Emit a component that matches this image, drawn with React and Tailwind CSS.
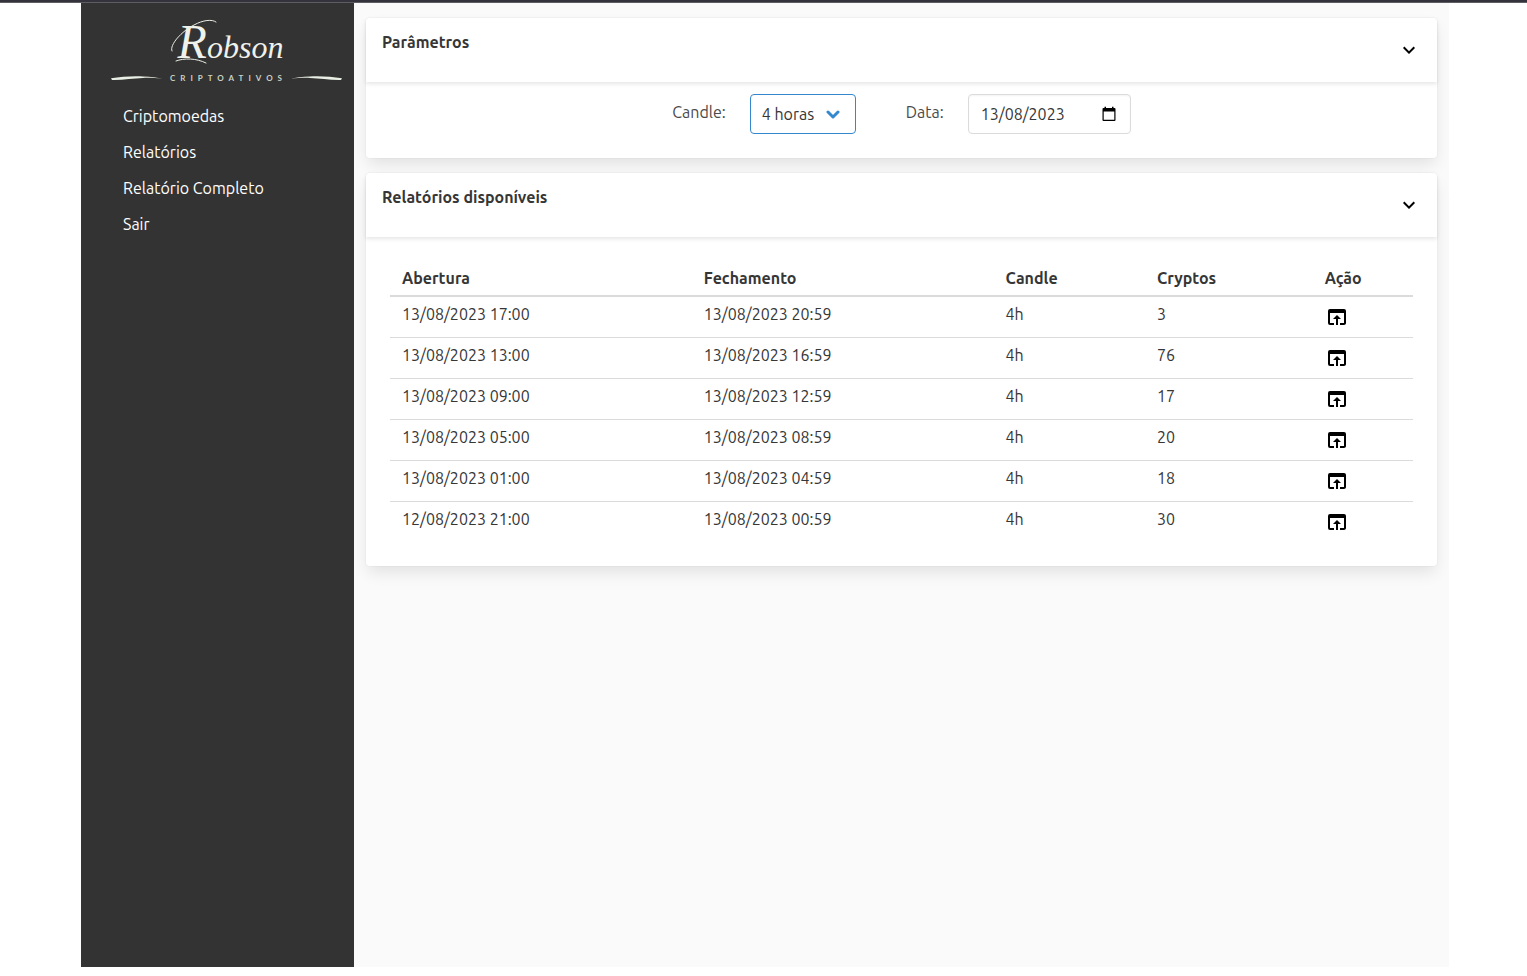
import React, { useState } from 'react';
import { MdExpandMore, MdOpenInBrowser } from 'react-icons/md';

const menuItems = ['Criptomoedas', 'Relatórios', 'Relatório Completo', 'Sair'];

const reports = [
  { open: '13/08/2023 17:00', close: '13/08/2023 20:59', candle: '4h', cryptos: 3 },
  { open: '13/08/2023 13:00', close: '13/08/2023 16:59', candle: '4h', cryptos: 76 },
  { open: '13/08/2023 09:00', close: '13/08/2023 12:59', candle: '4h', cryptos: 17 },
  { open: '13/08/2023 05:00', close: '13/08/2023 08:59', candle: '4h', cryptos: 20 },
  { open: '13/08/2023 01:00', close: '13/08/2023 04:59', candle: '4h', cryptos: 18 },
  { open: '12/08/2023 21:00', close: '13/08/2023 00:59', candle: '4h', cryptos: 30 },
];

const Swash = ({ className }) => (
  <svg className={className} width="52" height="6" viewBox="0 0 52 6" fill="#e9efe4">
    <path d="M0 3.200C10 1.600 22 .8 32 1.400c8 .4 14 1.200 20 2.200-8-.6-14-.9-20-.7C22 3.200 12 5.200 1 4.900z" />
  </svg>
);

const Logo = () => (
  <div className="flex h-[71px] flex-col items-center justify-between text-[#eef2ea]">
    <div className="relative flex h-[54px] items-center">
      {/* pen flourish around the initial */}
      <svg className="absolute top-1 left-0" width="48" height="54" viewBox="0 0 48 54" fill="none" stroke="#e9efe4" strokeWidth="1" strokeLinecap="round">
        <path d="M2 32C-1 26 12 12 24 6 33 1 42 0 46 3" />
        <path d="M6 42c8-3 20-3 30 2" />
      </svg>
      <span className="block pl-2 font-['Liberation_Serif',cursive] text-[32px] leading-none italic first-letter:text-5xl">Robson</span>
    </div>
    <div className="flex w-full items-center justify-between">
      <Swash />
      <span className="pl-1 font-[Lato,sans-serif] text-[8px] leading-4 font-bold tracking-[5px] text-[#c9d2c4]">CRIPTOATIVOS</span>
      <Swash className="-scale-x-100" />
    </div>
  </div>
);

const Card = ({ title, children }) => {
  const [open, setOpen] = useState(true);

  return (
    <section className="rounded bg-white shadow-[0_8px_16px_-2px_rgba(10,10,10,0.1),0_0_0_1px_rgba(10,10,10,0.02)]">
      <header className="flex h-16 items-stretch justify-between rounded-t shadow-[0_2px_4px_rgba(10,10,10,0.1)]">
        <h2 className="px-4 py-3 text-base font-bold text-[#363636]">{title}</h2>
        <button type="button" aria-label={title} aria-expanded={open} onClick={() => setOpen(!open)} className="px-4 text-black">
          <MdExpandMore size={24} />
        </button>
      </header>
      {open && children}
    </section>
  );
};

const App = () => {
  const [candle, setCandle] = useState('4');
  const [date, setDate] = useState('13/08/2023');

  return (
    <div className="min-h-screen bg-white font-['Ubuntu','Noto_Sans',sans-serif] text-base text-[#363636]">
      <div className="h-[3px] border-b border-[#5e5c64] bg-[#34323a]" />
      <div className="pl-[3px]">
        <div className="mx-auto flex min-h-[calc(100vh-12px)] max-w-[1368px]">
          <aside className="w-[273px] shrink-0 bg-[#333333] py-3 pr-3 pl-[30px]">
            <Logo />
            <nav className="mt-3">
              <ul>
                {menuItems.map((item) => (
                  <li key={item}>
                    <a href="#" className="block px-3 py-2 leading-5 text-white">{item}</a>
                  </li>
                ))}
              </ul>
            </nav>
          </aside>

          <main className="flex min-w-0 flex-1 flex-col gap-[15px] bg-[#fafafa] px-3 pt-[15px]">
            <Card title="Parâmetros">
              <div className="flex items-start justify-center gap-[50px] px-6 pt-3 pb-6 text-[#4a4a4a]">
                <div className="flex items-start gap-6">
                  <label htmlFor="candle" className="pt-[6px]">Candle:</label>
                  <div className="relative">
                    <select
                      id="candle"
                      value={candle}
                      onChange={(e) => setCandle(e.target.value)}
                      className="h-10 w-[106px] appearance-none rounded border border-[#3488ce] bg-white pl-[11px] text-[#363636] outline-none"
                    >
                      <option value="1">1 hora</option>
                      <option value="4">4 horas</option>
                    </select>
                    <svg className="pointer-events-none absolute top-4 right-4" width="14" height="9" viewBox="0 0 14 9" fill="none" stroke="#3488ce" strokeWidth="3" strokeLinecap="round" strokeLinejoin="round">
                      <path d="M2 2l5 5 5-5" />
                    </svg>
                  </div>
                </div>
                <div className="flex items-start gap-6">
                  <label htmlFor="date" className="pt-[6px]">Data:</label>
                  <div className="relative">
                    <input
                      id="date"
                      type="text"
                      value={date}
                      onChange={(e) => setDate(e.target.value)}
                      className="h-10 w-[163px] rounded border border-[#dbdbdb] bg-white px-3 text-[#363636] shadow-[inset_0_1px_2px_rgba(10,10,10,0.05)] outline-none"
                    />
                    <button type="button" aria-label="Abrir calendário" className="absolute top-3 right-[15px]">
                      <svg width="14" height="15" viewBox="0 0 14 15" fill="#000">
                        <path fillRule="evenodd" d="M1.500 2H2.500V.8H4V2h6V.8h1.500V2h1q1 0 1 1v11q0 1-1 1h-11q-1 0-1-1V3q0-1 1-1zM1.700 5.500v8.300h10.600V5.500z" />
                      </svg>
                    </button>
                  </div>
                </div>
              </div>
            </Card>

            <Card title="Relatórios disponíveis">
              <div className="p-6">
                <table className="w-full table-fixed text-left">
                  <thead>
                    <tr className="border-b-2 border-[#dbdbdb]">
                      <th className="w-[29.5%] px-3 py-[5px] font-bold">Abertura</th>
                      <th className="w-[29.5%] px-3 py-[5px] font-bold">Fechamento</th>
                      <th className="w-[14.8%] px-3 py-[5px] font-bold">Candle</th>
                      <th className="w-[16.4%] px-3 py-[5px] font-bold">Cryptos</th>
                      <th className="px-3 py-[5px] font-bold">Ação</th>
                    </tr>
                  </thead>
                  <tbody>
                    {reports.map((report) => (
                      <tr key={report.open} className="border-b border-[#dbdbdb] align-top last:border-b-0">
                        <td className="px-3 py-[5px]">{report.open}</td>
                        <td className="px-3 py-[5px]">{report.close}</td>
                        <td className="px-3 py-[5px]">{report.candle}</td>
                        <td className="px-3 py-[5px]">{report.cryptos}</td>
                        <td className="px-3 py-[5px]">
                          <button type="button" aria-label="Abrir relatório" className="flex h-[30px] items-center text-black">
                            <MdOpenInBrowser size={24} />
                          </button>
                        </td>
                      </tr>
                    ))}
                  </tbody>
                </table>
              </div>
            </Card>
          </main>
        </div>
      </div>
    </div>
  );
};

export default App;
